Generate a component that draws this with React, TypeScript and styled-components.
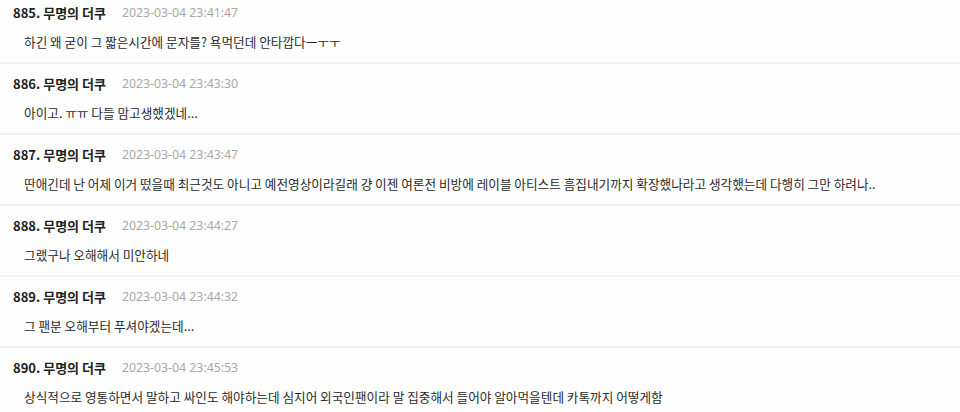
import React from "react";
import styled, { createGlobalStyle } from "styled-components";

const Global = createGlobalStyle`
  html, body { margin: 0; padding: 0; background: #ffffff; }
  body { font-family: "Noto Sans CJK KR", "Noto Sans", sans-serif; -webkit-font-smoothing: antialiased; }
  #root { overflow: hidden; height: 412px; }
`;

const List = styled.ul`
  list-style: none;
  margin: -7px 0 0 0;
  padding: 0;
`;

const Item = styled.li`
  display: flex;
  flex-direction: column;
  gap: 11px;
  padding: 11px 0 11px 13px;
  border-bottom: 2px solid #f3f3f3;
  background: #fefefe;
`;

const Head = styled.div`
  display: flex;
  align-items: center;
  gap: 16px;
  height: 18px;
  line-height: 18px;
`;

const Name = styled.span`
  font-size: 13px;
  font-weight: 700;
  color: #222222;
`;

const Time = styled.span`
  font-size: 12.3px;
  color: #a8a8a8;
  font-family: "Noto Sans", "Noto Sans CJK KR", sans-serif;
`;

const Body = styled.p`
  margin: 0;
  padding-left: 11px;
  height: 18px;
  line-height: 18px;
  font-size: 12.65px;
  color: #2a2a2a;
  white-space: nowrap;
`;

const comments = [
  { no: 885, time: "2023-03-04 23:41:47", text: "하긴 왜 굳이 그 짧은시간에 문자를? 욕먹던데 안타깝다ㅡㅜㅜ" },
  { no: 886, time: "2023-03-04 23:43:30", text: "아이고. ㅠㅠ 다들 맘고생했겠네..." },
  { no: 887, time: "2023-03-04 23:43:47", text: "딴애긴데 난 어제 이거 떴을때 최근것도 아니고 예전영상이라길래 걍 이젠 여론전 비방에 레이블 아티스트 흠집내기까지 확장했나라고 생각했는데 다행히 그만 하려나.." },
  { no: 888, time: "2023-03-04 23:44:27", text: "그랬구나 오해해서 미안하네" },
  { no: 889, time: "2023-03-04 23:44:32", text: "그 팬분 오해부터 푸셔야겠는데..." },
  { no: 890, time: "2023-03-04 23:45:53", text: "상식적으로 영통하면서 말하고 싸인도 해야하는데 심지어 외국인팬이라 말 집중해서 들어야 알아먹을텐데 카톡까지 어떻게함" },
];

export default function App() {
  return (
    <>
      <Global />
      <List>
        {comments.map((c) => (
          <Item key={c.no}>
            <Head>
              <Name>{c.no}. 무명의 더쿠</Name>
              <Time>{c.time}</Time>
            </Head>
            <Body>{c.text}</Body>
          </Item>
        ))}
      </List>
    </>
  );
}
